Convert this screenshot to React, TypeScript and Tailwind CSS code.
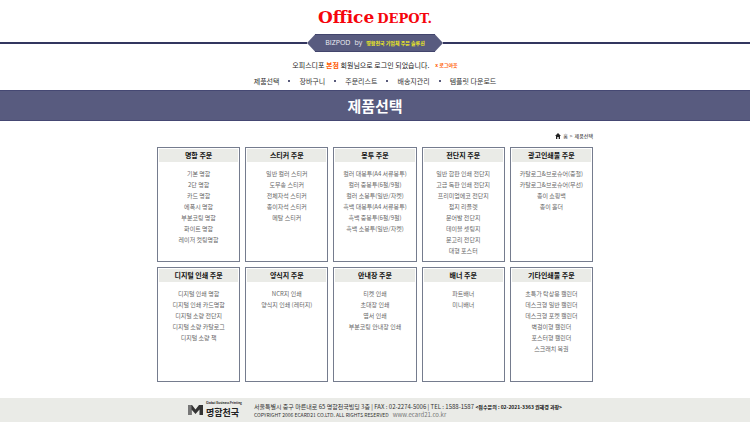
import React from "react";

type Category = { title: string; items: string[] };

const categories: Category[] = [
  { title: "명함 주문", items: ["기본 명함", "2단 명함", "카드 명함", "에폭시 명함", "부분코팅 명함", "화이트 명함", "레이저 컷팅명함"] },
  { title: "스티커 주문", items: ["일반 컬러 스티커", "도무송 스티커", "전체자석 스티커", "종이자석 스티커", "메탈 스티커"] },
  {
    title: "봉투 주문",
    items: ["컬러 대봉투(A4 서류봉투)", "컬러 중봉투(6절/9절)", "컬러 소봉투(일반/자켓)", "흑백 대봉투(A4 서류봉투)", "흑백 중봉투(6절/9절)", "흑백 소봉투(일반/자켓)"],
  },
  {
    title: "전단지 주문",
    items: ["일반 합판 인쇄 전단지", "고급 독판 인쇄 전단지", "프리미엄에코 전단지", "접지 리플렛", "문어발 전단지", "테이블 셋팅지", "문고리 전단지", "대형 포스터"],
  },
  { title: "광고인쇄물 주문", items: ["카탈로그&브로슈어(중철)", "카탈로그&브로슈어(무선)", "종이 쇼핑백", "종이 홀더"] },
  { title: "디지털 인쇄 주문", items: ["디지털 인쇄 명함", "디지털 인쇄 카드명함", "디지털 소량 전단지", "디지털 소량 카탈로그", "디지털 소량 책"] },
  { title: "양식지 주문", items: ["NCR지 인쇄", "양식지 인쇄 (레터지)"] },
  { title: "안내장 주문", items: ["티켓 인쇄", "초대장 인쇄", "엽서 인쇄", "부분코팅 안내장 인쇄"] },
  { title: "배너 주문", items: ["파트배너", "미니배너"] },
  {
    title: "기타인쇄물 주문",
    items: ["초특가 탁상용 캘린더", "데스크형 일반 캘린더", "데스크형 포켓 캘린더", "벽걸이형 캘린더", "포스터형 캘린더", "스크래치 복권"],
  },
];

const menu = ["제품선택", "장바구니", "주문리스트", "배송지관리", "템플릿 다운로드"];

function Banner() {
  return (
    <div className="mt-[5px] flex items-center">
      <div className="h-[2px] flex-1 bg-[#33365f]" />
      <div className="relative flex h-[18px] w-[136px] items-center justify-center gap-1 whitespace-nowrap">
        <svg className="absolute inset-0 h-full w-full" viewBox="0 0 136 18" aria-hidden="true">
          <path d="M0 9 8 0.5H128L136 9 128 17.5H8Z" fill="#585b7f" />
          <path d="M8 0.5H128M8 17.5H128" stroke="#42456c" strokeWidth="1" />
        </svg>
        <span className="relative font-['Open_Sans',sans-serif] text-[7px] text-[#f2f2f7]">BIZPOD</span>
        <span className="relative font-['Open_Sans',sans-serif] text-[7px] text-[#e6e7ee]">by</span>
        <a href="#home" className="relative text-[5px] font-bold text-[#f2ee1c]">명함천국 기업체 주문 솔루션</a>
      </div>
      <div className="h-[2px] flex-1 bg-[#33365f]" />
    </div>
  );
}

function Card({ title, items }: Category) {
  return (
    <section className="min-h-[115px] border border-[#757c8e] p-px">
      <h2 className="bg-[#eaebe7] text-center text-[7px] leading-[13px] font-bold text-[#111]">{title}</h2>
      <ul className="mt-[6px] text-center text-[6px] leading-[11px] whitespace-nowrap text-[#666]">
        {items.map((item) => (
          <li key={item}>
            <a href="#product">{item}</a>
          </li>
        ))}
      </ul>
    </section>
  );
}

export default function App() {
  return (
    <div className="flex min-h-screen flex-col bg-white font-['Noto_Sans_CJK_KR','Noto_Sans',sans-serif]">
      <header>
        <a
          href="#home"
          aria-label="Office DEPOT"
          className="mt-[7px] flex items-baseline justify-center gap-[3px] font-['DejaVu_Serif',serif] font-bold leading-5 text-[#f5050c]"
        >
          <span className="text-[17px]">Office</span>
          <span className="text-[13px]">DEPOT.</span>
        </a>
        <Banner />
        <div className="mt-[7px] flex items-center justify-center gap-[6px] leading-3">
          <p className="text-[7px] text-[#222]">
            오피스디포 <b className="text-[#ff5a00]">본점</b> 회원님으로 로그인 되었습니다.
          </p>
          <a href="#logout" className="text-[5px] font-bold text-[#ff5a00]">x 로그아웃</a>
        </div>
        <nav className="mt-1">
          <ul className="flex items-center justify-center text-[7px] leading-3 text-[#333]">
            {menu.map((name, i) => (
              <li key={name} className="flex items-center">
                {i > 0 && <span className="mx-[9px] size-[2px] rounded-full bg-[#222450]" />}
                <a href="#menu">{name}</a>
              </li>
            ))}
          </ul>
        </nav>
      </header>

      <h1 className="mt-[3px] border-y border-[#454873] bg-[#585b7f] text-center text-[15px] leading-[29px] font-bold text-white">제품선택</h1>

      <main className="mx-auto w-[436px] flex-1">
        <div className="mt-[9px] flex items-center justify-end gap-[2px] text-[5px] leading-3 text-[#333]">
          <svg className="size-[6px]" viewBox="0 0 6 6" aria-hidden="true">
            <path d="M3 0 6 3H5V6H3.7V4H2.3V6H1V3H0Z" fill="#222" />
          </svg>
          <a href="#home">홈</a>
          <span>&gt;</span>
          <span className="text-[#111]">제품선택</span>
        </div>
        <div className="mt-[5px] grid grid-cols-5 gap-[5px]">
          {categories.map((c) => (
            <Card key={c.title} {...c} />
          ))}
        </div>
      </main>

      <footer className="mt-4 flex items-center justify-center gap-3 bg-[#eaebe7] py-[3px]">
        <div className="flex items-center gap-[3px]">
          <svg className="h-[10px] w-[15px]" viewBox="0 0 15 10" aria-hidden="true">
            <path d="M0 0H4L7.5 4.5 11 0H15V10H11.5V4.5L7.5 9 3.5 4.5V10H0Z" fill="#333" />
            <path d="M0 0H3.5V10H0Z" fill="#777" />
          </svg>
          <div className="whitespace-nowrap text-[#222]">
            <p className="text-[3px] leading-[5px] font-bold">Global Business Printing</p>
            <p className="text-[9px] leading-[13px] font-bold">명함천국</p>
          </div>
        </div>
        <div className="whitespace-nowrap text-[#333]">
          <p className="text-[6px] leading-[9px]">
            서울특별시 중구 마른내로 65 명함천국빌딩 3층 | FAX : 02-2274-5006 | TEL : 1588-1587{" "}
            <b className="text-[5px] text-[#111]">&lt;접수문의 : 02-2021-3363 권혜경 과장&gt;</b>
          </p>
          <p className="flex items-center gap-1 text-[5px] leading-[8px]">
            COPYRIGHT 2006 ECARD21 CO.LTD. ALL RIGHTS RESERVED
            <a href="#site" className="text-[6px] text-[#777]">www.ecard21.co.kr</a>
          </p>
        </div>
      </footer>
    </div>
  );
}
